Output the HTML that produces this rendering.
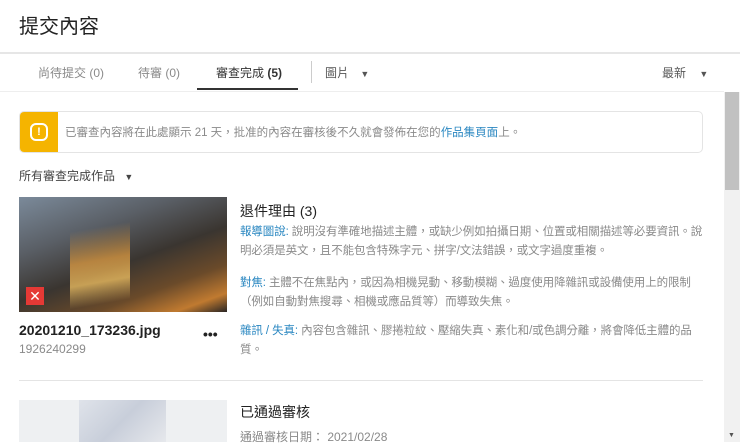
<!DOCTYPE html>
<html><head><meta charset="utf-8"><style>
*{margin:0;padding:0;box-sizing:border-box}
body{width:740px;height:442px;overflow:hidden;background:#fff;font-family:"Liberation Sans","Noto Sans CJK TC",sans-serif;color:#333;position:relative}
.a{position:absolute;white-space:nowrap}
.g{color:#8a8a8a}
.b{color:#2a87c1}
p.t{position:absolute;left:240px;white-space:nowrap;font-size:11.5px;line-height:19px;color:#8a8a8a;letter-spacing:-0.1px}
</style></head><body>
<div class="a" style="left:19px;top:10px;font-size:20px;color:#222">提交內容</div>
<div class="a" style="left:0;top:52px;width:740px;height:2px;background:#e6e6e6"></div>
<div class="a g" style="left:38px;top:64px;font-size:12px">尚待提交 (0)</div>
<div class="a g" style="left:138px;top:64px;font-size:12px">待審 (0)</div>
<div class="a" style="left:216px;top:64px;font-size:12px;color:#333">審查完成 <b>(5)</b></div>
<div class="a" style="left:197px;top:88px;width:101px;height:2px;background:#333"></div>
<div class="a" style="left:311px;top:61px;width:1px;height:22px;background:#ccc"></div>
<div class="a" style="left:325px;top:64px;font-size:12px;color:#555">圖片 <span style="font-size:9px;margin-left:8px">▼</span></div>
<div class="a" style="left:662px;top:64px;font-size:12px;color:#555">最新 <span style="font-size:9px;margin-left:10px">▼</span></div>
<div class="a" style="left:0;top:91px;width:724px;height:1px;background:#eee"></div>
<div class="a" style="left:724px;top:92px;width:16px;height:350px;background:#f1f1f1"></div>
<div class="a" style="left:725px;top:92px;width:14px;height:98px;background:#c1c1c1"></div>
<div class="a" style="left:728px;top:432px;font-size:7px;color:#555">▼</div>
<div class="a" style="left:19px;top:111px;width:684px;height:42px;border:1px solid #e4e4e4;border-radius:5px;overflow:hidden">
<div class="a" style="left:0;top:0;width:38px;height:40px;background:#f5b400"></div>
<div class="a" style="left:10px;top:11px;width:18px;height:18px;border:2px solid #fff;border-radius:6px;color:#fff;font-size:11px;font-weight:bold;text-align:center;line-height:14px">!</div>
<div class="a g" style="left:45px;top:12px;font-size:11.5px">已審查內容將在此處顯示 21 天，批准的內容在審核後不久就會發佈在您的<span class="b">作品集頁面</span>上。</div>
</div>
<div class="a" style="left:19px;top:167px;font-size:12px;color:#444">所有審查完成作品 <span style="font-size:9px;margin-left:6px">▼</span></div>
<div class="a" style="left:19px;top:197px;width:208px;height:115px;background:linear-gradient(160deg,#7b8a9a 0%,#5a5f66 30%,#3a3530 55%,#6a4a2a 75%,#c07a30 90%,#2a2624 100%)"></div>
<div class="a" style="left:70px;top:210px;width:60px;height:100px;background:linear-gradient(170deg,transparent 20%,#e8a040 50%,#ffcc66 70%,transparent 90%);opacity:.7"></div>
<div class="a" style="left:26px;top:287px;width:18px;height:18px;background:#e53935;color:#fff;font-size:14px;text-align:center;line-height:18px">✕</div>
<div class="a" style="left:19px;top:322px;font-size:14px;font-weight:bold;color:#222">20201210_173236.jpg</div>
<div class="a" style="left:203px;top:326px;font-size:14px;font-weight:bold;color:#222">•••</div>
<div class="a g" style="left:19px;top:342px;font-size:12px">1926240299</div>
<div class="a" style="left:240px;top:201px;font-size:14px;color:#222">退件理由 (3)</div>
<p class="t" style="top:223px"><span class="b">報導圖說:</span> 說明沒有準確地描述主體，或缺少例如拍攝日期、位置或相關描述等必要資訊。說<br>明必須是英文，且不能包含特殊字元、拼字/文法錯誤，或文字過度重複。</p>
<p class="t" style="top:274px"><span class="b">對焦:</span> 主體不在焦點內，或因為相機晃動、移動模糊、過度使用降雜訊或設備使用上的限制<br>（例如自動對焦搜尋、相機或應品質等）而導致失焦。</p>
<p class="t" style="top:322px"><span class="b">雜訊 / 失真:</span> 內容包含雜訊、膠捲粒紋、壓縮失真、素化和/或色調分離，將會降低主體的品<br>質。</p>
<div class="a" style="left:19px;top:380px;width:684px;height:1px;background:#e4e4e4"></div>
<div class="a" style="left:19px;top:400px;width:208px;height:42px;background:#eef0f2"></div>
<div class="a" style="left:79px;top:400px;width:87px;height:42px;background:linear-gradient(135deg,#dfe3ea,#c8ceda,#e6e8ec)"></div>
<div class="a" style="left:240px;top:402px;font-size:14px;color:#222">已通過審核</div>
<div class="a g" style="left:240px;top:428px;font-size:12px">通過審核日期： 2021/02/28</div>
</body></html>
